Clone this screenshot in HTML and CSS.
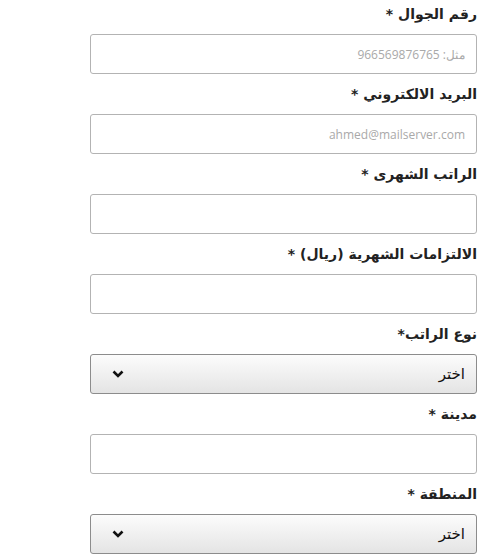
FILE: index.html
```html
<!DOCTYPE html>
<html lang="ar" dir="rtl">
<head>
<meta charset="utf-8">
<link rel="stylesheet" href="styles.css">
</head>
<body>
<form class="form">
  <div class="group">
    <label class="label">رقم الجوال *</label>
    <input class="field" type="text" placeholder="مثل: 966569876765">
  </div>
  <div class="group">
    <label class="label">البريد الالكتروني *</label>
    <input class="field" type="text" placeholder="ahmed@mailserver.com">
  </div>
  <div class="group">
    <label class="label">الراتب الشهرى *</label>
    <input class="field" type="text">
  </div>
  <div class="group">
    <label class="label">الالتزامات الشهرية (ريال) *</label>
    <input class="field" type="text">
  </div>
  <div class="group">
    <label class="label">نوع الراتب*</label>
    <div class="select">
      <span class="select-text">اختر</span>
      <svg class="chev" width="12" height="8" viewBox="0 0 12 8"><path d="M1.5 1.5 L6 6 L10.5 1.5" fill="none" stroke="#111" stroke-width="2.6"/></svg>
    </div>
  </div>
  <div class="group">
    <label class="label">مدينة *</label>
    <input class="field" type="text">
  </div>
  <div class="group">
    <label class="label">المنطقة *</label>
    <div class="select">
      <span class="select-text">اختر</span>
      <svg class="chev" width="12" height="8" viewBox="0 0 12 8"><path d="M1.5 1.5 L6 6 L10.5 1.5" fill="none" stroke="#111" stroke-width="2.6"/></svg>
    </div>
  </div>
  <div class="actions">
    <button class="btn" type="button" aria-label="submit"></button>
  </div>
</form>
</body>
</html>
```
FILE: styles.css
```css
html, body {
  margin: 0;
  padding: 0;
  background: #fff;
}
body {
  font-family: "DejaVu Sans", sans-serif;
  color: #222;
  overflow: hidden;
}
.form {
  width: 387px;
  margin-right: 10px;
  margin-left: auto;
  display: flex;
  flex-direction: column;
}
.group {
  display: flex;
  flex-direction: column;
  height: 80px;
}
.label {
  display: block;
  height: 34px;
  line-height: 28px;
  font-size: 14px;
  font-weight: bold;
  color: #222;
}
.field {
  box-sizing: border-box;
  width: 387px;
  height: 40px;
  border: 1px solid #b3b3b3;
  border-radius: 3px;
  padding: 0 11px;
  font-family: "Open Sans", sans-serif;
  font-size: 12px;
  outline: none;
  background: #fff;
}
.field::placeholder {
  color: #a9a9a9;
}
.select {
  box-sizing: border-box;
  width: 387px;
  height: 40px;
  border: 1px solid #8c8c8c;
  border-radius: 3px;
  background: linear-gradient(#fcfcfc, #e4e4e4);
  display: flex;
  align-items: center;
  justify-content: space-between;
  padding: 0 11px 0 21px;
}
.select-text {
  font-size: 15px;
  color: #111;
}
.chev {
  display: block;
}
.actions {
  display: flex;
  padding-right: 18px;
}
.btn {
  width: 86px;
  height: 30px;
  border: 1px solid #777;
  border-radius: 3px;
  background: #fff;
  margin-top: -1px;
}
```
